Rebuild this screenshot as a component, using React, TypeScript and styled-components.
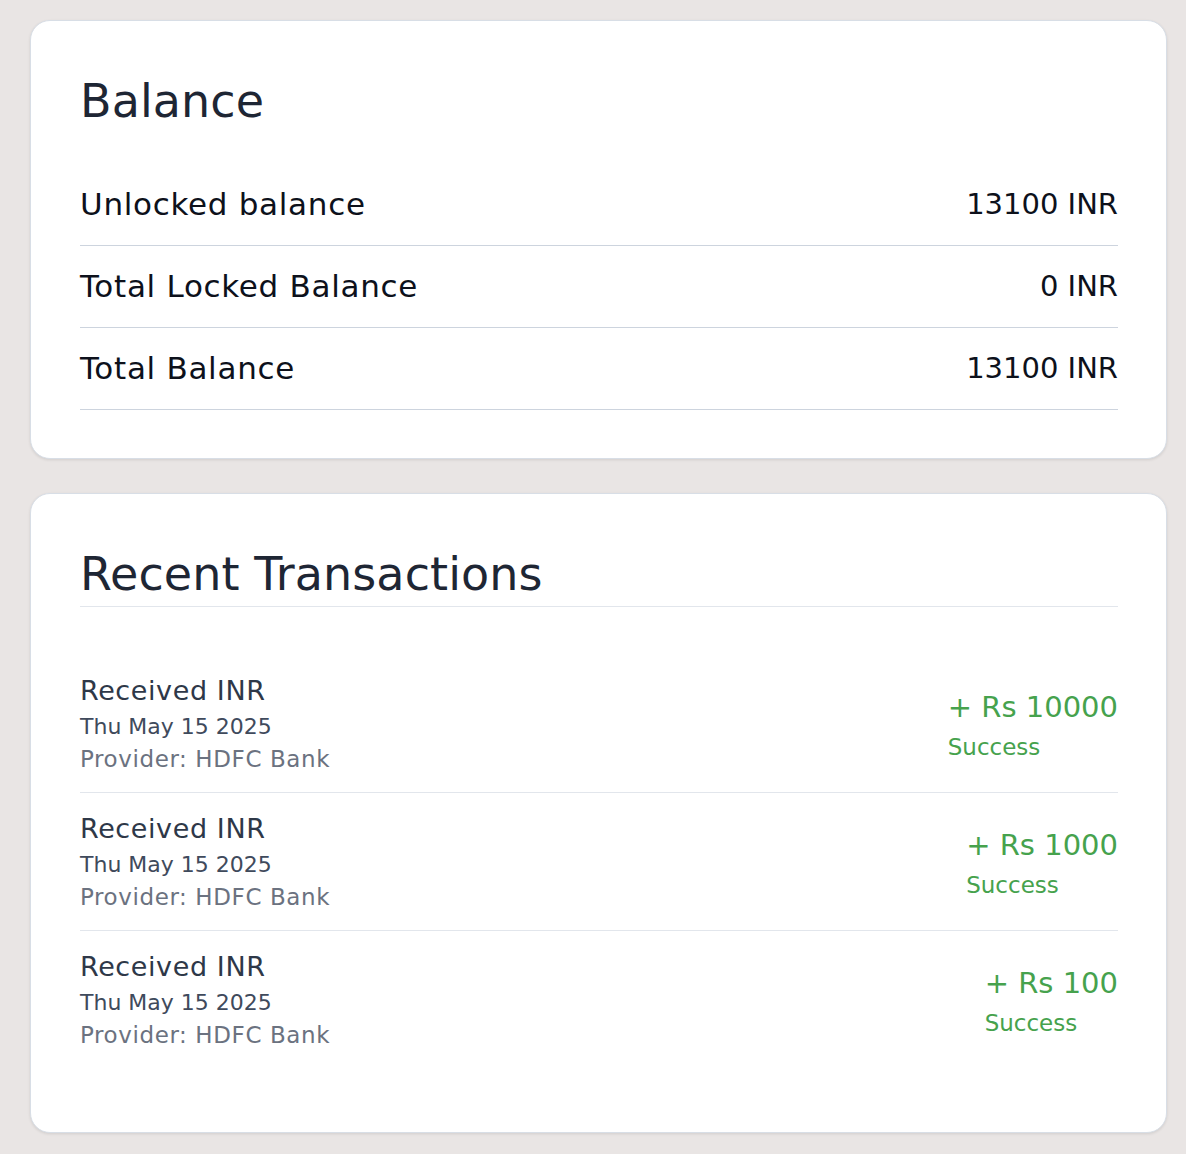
import styled, { createGlobalStyle } from 'styled-components'

const GlobalStyle = createGlobalStyle`
	html, body {
		margin: 0;
		padding: 0;
		background: #e9e5e4;
	}
	body {
		font-family: 'DejaVu Sans', 'Liberation Sans', sans-serif;
	}
	* {
		box-sizing: border-box;
	}
`

const Page = styled.main`
	display: flex;
	flex-direction: column;
	gap: 34px;
	min-height: 1154px;
	padding: 20px 20px 20px 30px;
`

const Card = styled.section`
	width: 1137px;
	display: flex;
	flex-direction: column;
	padding: 48px 48px 48px 49px;
	background: #fff;
	border: 1px solid #d8dee6;
	border-radius: 20px;
	box-shadow: 0 1px 3px rgba(0, 0, 0, 0.1);
`

const CardTitle = styled.h2<{ $underline?: boolean }>`
	margin: 0 0 ${({ $underline }) => ($underline ? '48px' : '31px')} 0;
	height: ${({ $underline }) => ($underline ? '65px' : '64px')};
	font-size: 46px;
	line-height: 64px;
	font-weight: 400;
	letter-spacing: 0.1px;
	color: #1e2634;
	border-bottom: ${({ $underline }) => ($underline ? '1px solid #e2e6ec' : 'none')};
`

const BalanceRow = styled.div`
	display: flex;
	align-items: center;
	justify-content: space-between;
	padding: 22px 0;
	border-bottom: 1px solid #cdd4de;
	color: #0d111b;
	line-height: 37px;
`

const BalanceLabel = styled.span`
	font-size: 31px;
	letter-spacing: 0.7px;
`

const BalanceValue = styled.span`
	font-size: 29px;
`

const TxList = styled.div`
	display: flex;
	flex-direction: column;
	padding-bottom: 16px;
`

const TxRow = styled.div`
	display: flex;
	justify-content: space-between;
	padding: 16px 0 17px;
	border-bottom: 1px solid #e2e6ec;
	&:last-child {
		border-bottom: none;
	}
`

const TxInfo = styled.div`
	display: flex;
	flex-direction: column;
`

const TxTitle = styled.span`
	font-size: 27px;
	line-height: 40px;
	letter-spacing: 0.6px;
	color: #2e3848;
`

const TxDate = styled.span`
	font-size: 22px;
	line-height: 32px;
	color: #3f4a5c;
`

const TxProvider = styled.span`
	font-size: 23px;
	line-height: 32px;
	letter-spacing: 0.6px;
	color: #6b7280;
`

const TxAmountBox = styled.div`
	display: flex;
	flex-direction: column;
	align-items: flex-start;
	padding-top: 16px;
	color: #46a24d;
`

const TxAmount = styled.span`
	font-size: 29px;
	line-height: 40px;
`

const TxStatus = styled.span`
	font-size: 23px;
	line-height: 40px;
`

const balances = [
	{ label: 'Unlocked balance', value: '13100 INR' },
	{ label: 'Total Locked Balance', value: '0 INR' },
	{ label: 'Total Balance', value: '13100 INR' },
]

const transactions = [
	{ amount: 10000, date: 'Thu May 15 2025', provider: 'HDFC Bank', status: 'Success' },
	{ amount: 1000, date: 'Thu May 15 2025', provider: 'HDFC Bank', status: 'Success' },
	{ amount: 100, date: 'Thu May 15 2025', provider: 'HDFC Bank', status: 'Success' },
]

const App = () => {
	return (
		<>
			<GlobalStyle />
			<Page>
				<Card>
					<CardTitle>Balance</CardTitle>
					{balances.map((b) => (
						<BalanceRow key={b.label}>
							<BalanceLabel>{b.label}</BalanceLabel>
							<BalanceValue>{b.value}</BalanceValue>
						</BalanceRow>
					))}
				</Card>
				<Card>
					<CardTitle $underline>Recent Transactions</CardTitle>
					<TxList>
						{transactions.map((t, i) => (
							<TxRow key={i}>
								<TxInfo>
									<TxTitle>Received INR</TxTitle>
									<TxDate>{t.date}</TxDate>
									<TxProvider>Provider: {t.provider}</TxProvider>
								</TxInfo>
								<TxAmountBox>
									<TxAmount>+ Rs {t.amount}</TxAmount>
									<TxStatus>{t.status}</TxStatus>
								</TxAmountBox>
							</TxRow>
						))}
					</TxList>
				</Card>
			</Page>
		</>
	)
}

export default App
